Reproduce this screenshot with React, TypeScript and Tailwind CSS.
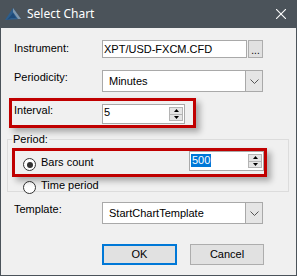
import React from "react";

function SpinButtons() {
  return (
    <div className="flex flex-col w-[14px] h-[14px] my-auto mr-[1px] ml-auto">
      <div className="flex-1 flex items-center justify-center bg-[#e5e5e5] border border-[#b4b4b4]">
        <svg width="5" height="3" viewBox="0 0 5 3"><polygon points="0,3 2.5,0 5,3" fill="#000" /></svg>
      </div>
      <div className="flex-1 flex items-center justify-center bg-[#e5e5e5] border border-t-0 border-[#b4b4b4]">
        <svg width="5" height="3" viewBox="0 0 5 3"><polygon points="0,0 5,0 2.5,3" fill="#000" /></svg>
      </div>
    </div>
  );
}

function Chevron() {
  return (
    <div className="w-[17px] h-full bg-[#e5e5e5] border-l border-[#a9a9a9] flex items-center justify-center">
      <svg width="9" height="5" viewBox="0 0 9 5">
        <polyline points="0.5,0.5 4.5,4.5 8.5,0.5" fill="none" stroke="#555" strokeWidth="1" />
      </svg>
    </div>
  );
}

function Radio({ checked }: { checked: boolean }) {
  return (
    <div className="w-[13px] h-[13px] rounded-full border border-[#333] bg-white flex items-center justify-center">
      {checked && <div className="w-[6px] h-[6px] rounded-full bg-[#333]" />}
    </div>
  );
}

export default function App() {
  return (
    <div
      className="w-[297px] h-[276px] bg-[#4b535a] flex flex-col"
      style={{ fontFamily: '"Liberation Sans", Arial, sans-serif' }}
    >
      {/* Title bar */}
      <div className="h-[28px] flex items-center shrink-0">
        <svg className="ml-[5px]" width="17" height="14" viewBox="0 0 17 14">
          <polygon points="0,13 8,1 16,12" fill="#2c5d8c" />
          <polygon points="8,1 16,12 13,12 8,5" fill="#7f97ad" />
          <polygon points="2,13 8,6 11,11 6,11" fill="#1e4a78" />
        </svg>
        <span
          className="ml-[5px] text-white text-[12px] leading-[16px]"
          style={{ fontFamily: '"Noto Sans", sans-serif' }}
        >
          Select Chart
        </span>
        <svg className="ml-auto mr-[11px]" width="10" height="10" viewBox="0 0 10 10">
          <line x1="0" y1="0" x2="10" y2="10" stroke="#fff" strokeWidth="1.1" />
          <line x1="10" y1="0" x2="0" y2="10" stroke="#fff" strokeWidth="1.1" />
        </svg>
      </div>

      {/* Body */}
      <div className="relative flex-1 mx-px mb-px bg-[#f0f0f0] text-[11px] leading-[13px] text-black flex flex-col">
        {/* Instrument */}
        <div className="flex h-[18px] mt-[12px] pl-[13px]">
          <div className="w-[88px] pt-[2px]">Instrument:</div>
          <div className="w-[145px] h-[18px] bg-white border border-[#a9a9a9] flex items-center pl-[1px]">
            XPT/USD-FXCM.CFD
          </div>
          <div className="ml-[1px] w-[15px] h-[18px] bg-[#e1e1e1] border border-[#adadad] flex items-end justify-center text-[10px] leading-[12px]">
            ...
          </div>
        </div>

        {/* Periodicity */}
        <div className="flex h-[22px] mt-[12px] pl-[13px]">
          <div className="w-[88px] pt-[1px]">Periodicity:</div>
          <div className="w-[161px] h-[22px] bg-white border border-[#a9a9a9] flex items-center">
            <div className="flex-1 pl-[6px]">Minutes</div>
            <Chevron />
          </div>
        </div>

        {/* Interval */}
        <div className="flex h-[20px] mt-[12px] pl-[13px]">
          <div className="w-[88px]">Interval:</div>
          <div className="w-[83px] h-[20px] bg-white border border-[#a9a9a9] flex">
            <div className="pl-[1px] pt-[1px]">5</div>
            <SpinButtons />
          </div>
        </div>

        {/* Period group */}
        <div className="relative ml-[6px] mt-[15px] w-[282px] h-[53px] border border-[#dcdcdc] flex flex-col">
          <div className="absolute left-[4px] top-[-7px] px-[1px] bg-[#f0f0f0]">Period:</div>
          <div className="flex h-[20px] mt-[11px]">
            <div className="ml-[15px] mt-[7px]">
              <Radio checked />
            </div>
            <div className="ml-[5px] mt-[5px]">Bars count</div>
            <div className="ml-auto mr-[24px] w-[75px] h-[20px] bg-white border border-[#a9a9a9] flex">
              <div className="ml-[1px] mt-[2px] h-[13px] bg-[#0078d7] text-white px-[1px]">500</div>
              <SpinButtons />
            </div>
          </div>
          <div className="flex mt-[8px]">
            <div className="ml-[15px] mt-[2px]">
              <Radio checked={false} />
            </div>
            <div className="ml-[5px]">Time period</div>
          </div>
        </div>

        {/* Template */}
        <div className="flex h-[22px] mt-[10px] pl-[13px]">
          <div className="w-[88px] pt-[1px]">Template:</div>
          <div className="w-[161px] h-[22px] bg-white border border-[#a9a9a9] flex items-center">
            <div className="flex-1 pl-[6px]">StartChartTemplate</div>
            <Chevron />
          </div>
        </div>

        {/* Buttons */}
        <div className="flex mt-[20px] pl-[101px]">
          <div className="w-[75px] h-[21px] bg-[#e1e1e1] border-2 border-[#0078d7] flex items-center justify-center">
            OK
          </div>
          <div className="ml-[13px] w-[74px] h-[21px] bg-[#e1e1e1] border border-[#adadad] flex items-center justify-center">
            Cancel
          </div>
        </div>

        {/* Red highlight overlays */}
        <div className="absolute left-[8px] top-[70px] w-[187px] h-[30px] border-[3px] border-[#c00000] shadow-[4px_4px_6px_rgba(0,0,0,0.3)] pointer-events-none" />
        <div className="absolute left-[11px] top-[120px] w-[255px] h-[29px] border-[3px] border-[#c00000] shadow-[4px_4px_6px_rgba(0,0,0,0.3)] pointer-events-none" />
      </div>
    </div>
  );
}
